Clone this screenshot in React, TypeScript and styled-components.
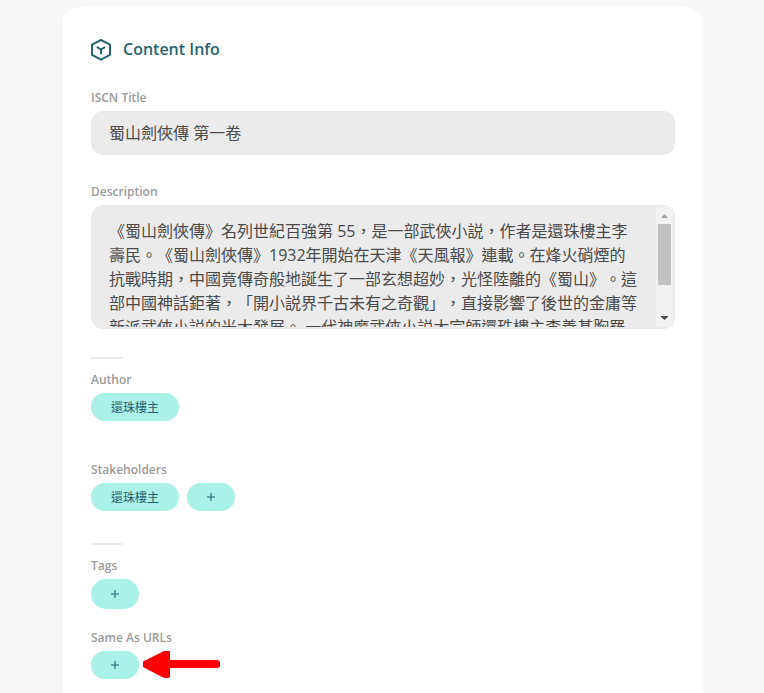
import React from "react";
import styled, { createGlobalStyle } from "styled-components";

const GlobalStyle = createGlobalStyle`
  *, *::before, *::after { box-sizing: border-box; }
  html, body { margin: 0; padding: 0; background: #f7f7f7; }
  body { overflow: hidden; font-family: "Open Sans", "Noto Sans CJK TC", sans-serif; }
`;

const Page = styled.div`
  height: 693px;
  padding: 7px 61px 0 63px;
  background: #f7f7f7;
  overflow: hidden;
`;

const Card = styled.main`
  display: flex;
  flex-direction: column;
  height: 720px;
  padding: 30px 28px 0;
  background: #fff;
  border-radius: 22px 22px 0 0 / 13px 13px 0 0;
`;

const Header = styled.header`
  display: flex;
  align-items: center;
  gap: 12px;
  height: 24px;
  margin-bottom: 29px;
  color: #28646e;
`;

const Heading = styled.h1`
  margin: 0;
  font-size: 16px;
  line-height: 24px;
  font-weight: 600;
`;

const Field = styled.section<{ $gap: number }>`
  display: flex;
  flex-direction: column;
  margin-bottom: ${(p) => p.$gap}px;
`;

const Label = styled.div`
  height: 16px;
  margin-bottom: 5px;
  font-size: 12px;
  line-height: 16px;
  font-weight: 600;
  color: #9b9b9b;
  white-space: nowrap;
`;

const TextInput = styled.div`
  height: 44px;
  padding: 0 18px;
  border-radius: 12px;
  background: #ebebeb;
  color: #4a4a4a;
  font-size: 16px;
  line-height: 44px;
  white-space: nowrap;
`;

const TextArea = styled.div`
  display: flex;
  height: 124px;
  padding: 2px;
  border-radius: 12px;
  background: #ebebeb;
`;

const TextContent = styled.div`
  flex: 1;
  min-width: 0;
  padding: 12px 0 0 16px;
  overflow: hidden;
  color: #4a4a4a;
  font-size: 16px;
  line-height: 24px;
  text-spacing-trim: space-all;
  font-kerning: none;
`;

const TextLine = styled.div`
  height: 24px;
  white-space: nowrap;
`;

const ScrollTrack = styled.div`
  display: flex;
  flex-direction: column;
  align-items: center;
  width: 17px;
  background: #f1f1f1;
`;

const ScrollButton = styled.div<{ $color: string }>`
  display: flex;
  align-items: center;
  justify-content: center;
  height: 17px;
  color: ${(p) => p.$color};
`;

const ScrollThumb = styled.div`
  width: 13px;
  height: 61px;
  margin-bottom: auto;
  background: #c1c1c1;
`;

const Rule = styled.div`
  width: 32px;
  height: 2px;
  margin-bottom: 13px;
  background: #ebebeb;
`;

const PillRow = styled.div`
  display: flex;
  align-items: center;
  gap: 8px;
`;

const Pill = styled.button<{ $width: number; $height?: number }>`
  display: flex;
  align-items: center;
  justify-content: center;
  width: ${(p) => p.$width}px;
  height: ${(p) => p.$height ?? 28}px;
  padding: 0;
  border: 0;
  border-radius: 15px;
  background: #aaf1e7;
  color: #28646e;
  font: 400 12px/16px "Open Sans", "Noto Sans CJK TC", sans-serif;
`;

const PillText = styled.span`
  padding-top: 1px;
`;

const Pointer = styled.svg`
  display: block;
  margin-left: -5px;
`;

const PlusIcon = () => (
  <svg width="8" height="8" viewBox="0 0 8 8" fill="none" stroke="#488a8f" strokeWidth="1.5">
    <path d="M4 0v8M0 4h8" />
  </svg>
);

const NodeIcon = () => (
  <svg width="20" height="24" viewBox="0 0 20 24" fill="none" stroke="currentColor" strokeWidth="2" strokeLinejoin="round" strokeLinecap="round">
    <path d="M10 3 19 7.700v10.200L10 22.600 1 17.900V7.700Z" />
    <path d="M6.500 10.300 10 12.500l3.500-2.200M10 12.500v4" />
  </svg>
);

const descriptionLines = [
  "《蜀山劍俠傳》名列世紀百強第 55，是一部武俠小説，作者是還珠樓主李",
  "壽民。《蜀山劍俠傳》1932年開始在天津《天風報》連載。在烽火硝煙的",
  "抗戰時期，中國竟傳奇般地誕生了一部玄想超妙，光怪陸離的《蜀山》。這",
  "部中國神話鉅著，「開小説界千古未有之奇觀」，直接影響了後世的金庸等",
  "新派武俠小説的光大發展。 一代神魔武俠小説大宗師還珠樓主李善基胸羅",
];

export default function App() {
  return (
    <Page>
      <GlobalStyle />
      <Card>
        <Header>
          <NodeIcon />
          <Heading>Content Info</Heading>
        </Header>
        <Field $gap={29}>
          <Label>ISCN Title</Label>
          <TextInput>蜀山劍俠傳 第一卷</TextInput>
        </Field>
        <Field $gap={28}>
          <Label>Description</Label>
          <TextArea>
            <TextContent>
              {descriptionLines.map((line) => (
                <TextLine key={line}>{line}</TextLine>
              ))}
            </TextContent>
            <ScrollTrack>
              <ScrollButton $color="#a3a3a3">
                <svg width="7" height="4" viewBox="0 0 7 4" fill="currentColor"><path d="M0 4 3.5 0 7 4Z" /></svg>
              </ScrollButton>
              <ScrollThumb />
              <ScrollButton $color="#505050">
                <svg width="7" height="6" viewBox="0 0 7 6" fill="currentColor"><path d="M0 0h7v1L3.500 4 0 1Z" /></svg>
              </ScrollButton>
            </ScrollTrack>
          </TextArea>
        </Field>
        <Rule />
        <Field $gap={41}>
          <Label>Author</Label>
          <PillRow><Pill $width={88}><PillText>還珠樓主</PillText></Pill></PillRow>
        </Field>
        <Field $gap={32}>
          <Label>Stakeholders</Label>
          <PillRow>
            <Pill $width={88}><PillText>還珠樓主</PillText></Pill>
            <Pill $width={48}><PlusIcon /></Pill>
          </PillRow>
        </Field>
        <Rule />
        <Field $gap={21}>
          <Label>Tags</Label>
          <PillRow><Pill $width={48} $height={30}><PlusIcon /></Pill></PillRow>
        </Field>
        <Field $gap={0}>
          <Label>Same As URLs</Label>
          <PillRow>
            <Pill $width={48}><PlusIcon /></Pill>
            <Pointer width="79" height="28" viewBox="0 0 79 28" fill="#fe0000">
              <path d="M1 10.500 19 1.500 22 0h6v9h48l2 2v4.500L76 17H28v9l-1.500 1H23l-4-1.500L1 16Z" />
            </Pointer>
          </PillRow>
        </Field>
      </Card>
    </Page>
  );
}
